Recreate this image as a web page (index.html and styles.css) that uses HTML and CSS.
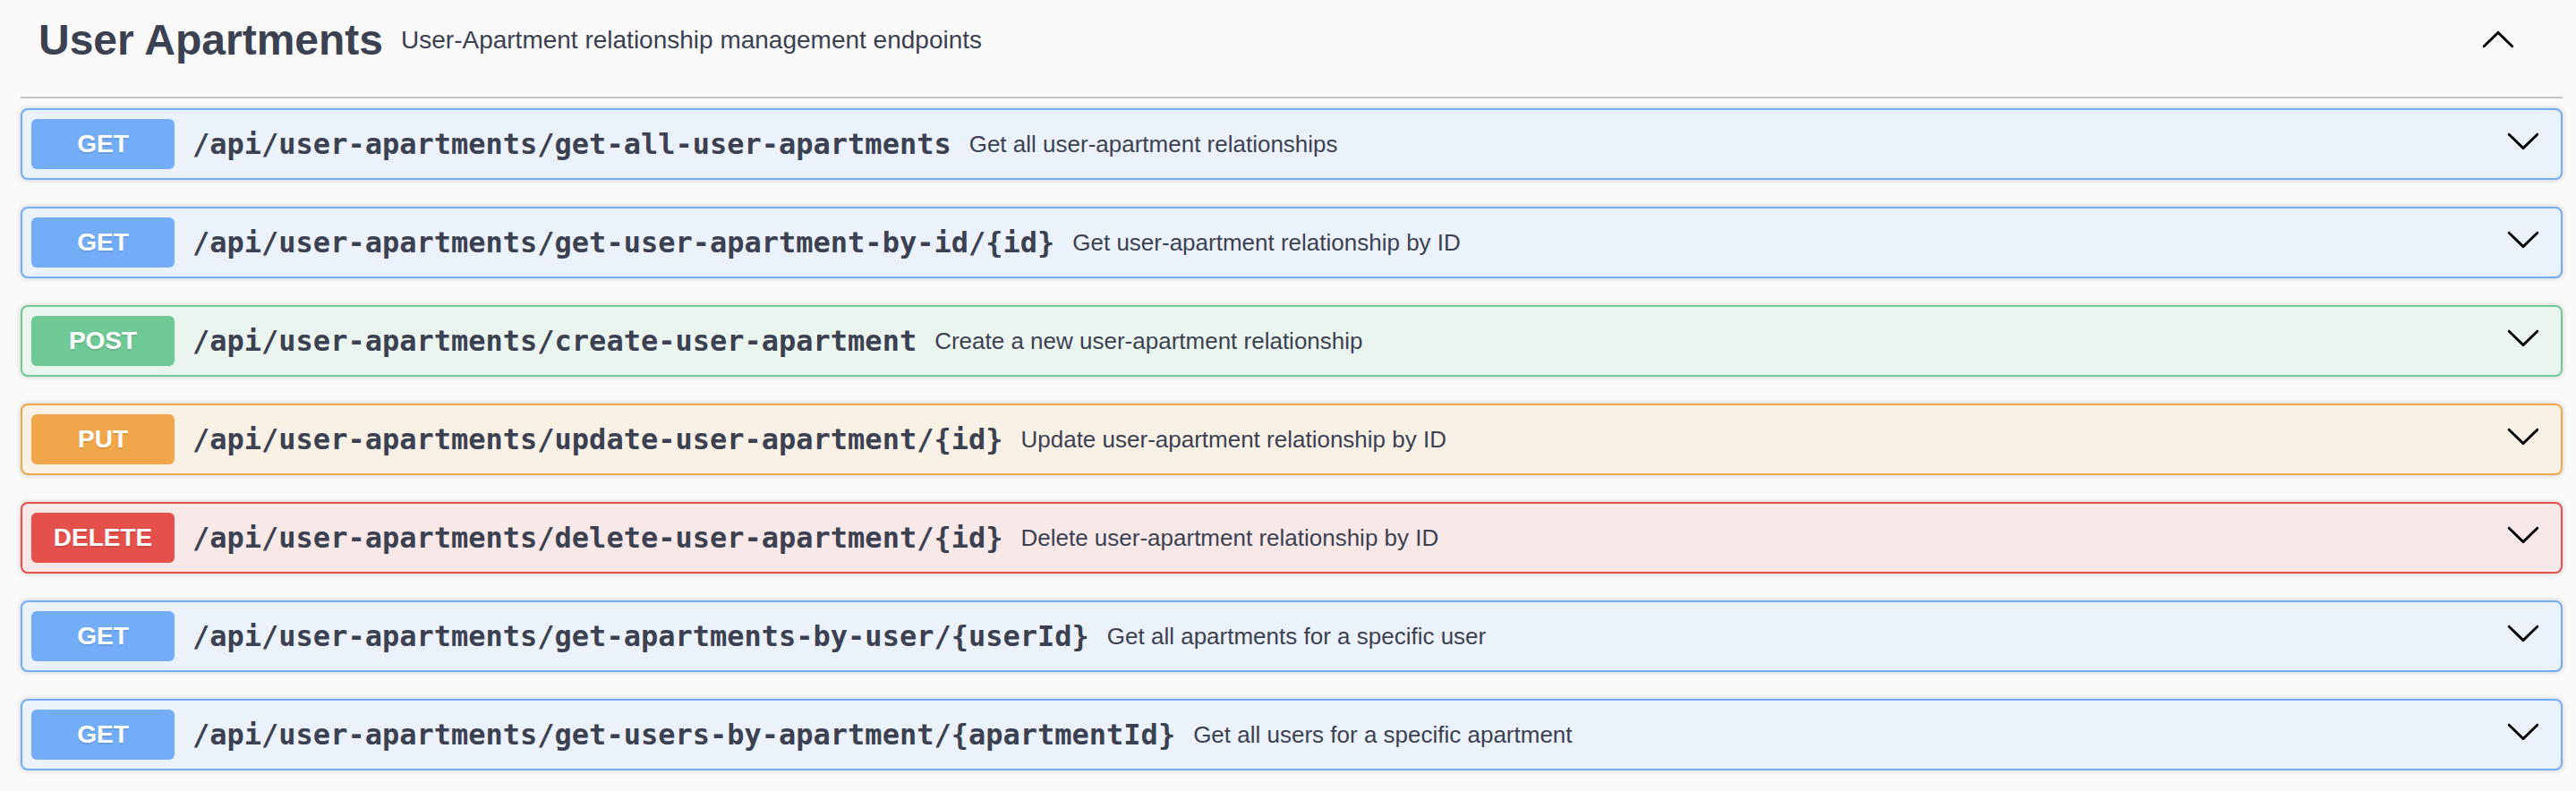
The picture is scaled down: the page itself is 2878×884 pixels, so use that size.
FILE: index.html
```html
<!DOCTYPE html>
<html lang="en">
<head>
<meta charset="utf-8">
<title>User Apartments</title>
<link rel="stylesheet" href="styles.css">
</head>
<body>
<div class="tag-section">
  <h3 class="tag">
    <span class="tag-name">User Apartments</span>
    <small class="tag-desc">User-Apartment relationship management endpoints</small>
    <button class="tag-toggle" type="button" aria-label="Collapse">
      <svg class="arrow up" viewBox="0 0 20 20" width="40" height="40"><path d="M17.418 6.109c.272-.268.709-.268.979 0s.271.701 0 .969l-7.908 7.83c-.27.268-.707.268-.979 0l-7.908-7.83c-.27-.268-.27-.701 0-.969.271-.268.709-.268.979 0L10 13.25l7.418-7.141z"/></svg>
    </button>
  </h3>

  <div class="op op-get">
    <span class="method">GET</span>
    <span class="path">/api/user-apartments/get-all-user-apartments</span>
    <span class="desc">Get all user-apartment relationships</span>
    <svg class="arrow" viewBox="0 0 20 20" width="40" height="40"><path d="M17.418 6.109c.272-.268.709-.268.979 0s.271.701 0 .969l-7.908 7.83c-.27.268-.707.268-.979 0l-7.908-7.83c-.27-.268-.27-.701 0-.969.271-.268.709-.268.979 0L10 13.25l7.418-7.141z"/></svg>
  </div>

  <div class="op op-get">
    <span class="method">GET</span>
    <span class="path">/api/user-apartments/get-user-apartment-by-id/{id}</span>
    <span class="desc">Get user-apartment relationship by ID</span>
    <svg class="arrow" viewBox="0 0 20 20" width="40" height="40"><path d="M17.418 6.109c.272-.268.709-.268.979 0s.271.701 0 .969l-7.908 7.83c-.27.268-.707.268-.979 0l-7.908-7.83c-.27-.268-.27-.701 0-.969.271-.268.709-.268.979 0L10 13.25l7.418-7.141z"/></svg>
  </div>

  <div class="op op-post">
    <span class="method">POST</span>
    <span class="path">/api/user-apartments/create-user-apartment</span>
    <span class="desc">Create a new user-apartment relationship</span>
    <svg class="arrow" viewBox="0 0 20 20" width="40" height="40"><path d="M17.418 6.109c.272-.268.709-.268.979 0s.271.701 0 .969l-7.908 7.83c-.27.268-.707.268-.979 0l-7.908-7.83c-.27-.268-.27-.701 0-.969.271-.268.709-.268.979 0L10 13.25l7.418-7.141z"/></svg>
  </div>

  <div class="op op-put">
    <span class="method">PUT</span>
    <span class="path">/api/user-apartments/update-user-apartment/{id}</span>
    <span class="desc">Update user-apartment relationship by ID</span>
    <svg class="arrow" viewBox="0 0 20 20" width="40" height="40"><path d="M17.418 6.109c.272-.268.709-.268.979 0s.271.701 0 .969l-7.908 7.83c-.27.268-.707.268-.979 0l-7.908-7.83c-.27-.268-.27-.701 0-.969.271-.268.709-.268.979 0L10 13.25l7.418-7.141z"/></svg>
  </div>

  <div class="op op-delete">
    <span class="method">DELETE</span>
    <span class="path">/api/user-apartments/delete-user-apartment/{id}</span>
    <span class="desc">Delete user-apartment relationship by ID</span>
    <svg class="arrow" viewBox="0 0 20 20" width="40" height="40"><path d="M17.418 6.109c.272-.268.709-.268.979 0s.271.701 0 .969l-7.908 7.83c-.27.268-.707.268-.979 0l-7.908-7.83c-.27-.268-.27-.701 0-.969.271-.268.709-.268.979 0L10 13.25l7.418-7.141z"/></svg>
  </div>

  <div class="op op-get">
    <span class="method">GET</span>
    <span class="path">/api/user-apartments/get-apartments-by-user/{userId}</span>
    <span class="desc">Get all apartments for a specific user</span>
    <svg class="arrow" viewBox="0 0 20 20" width="40" height="40"><path d="M17.418 6.109c.272-.268.709-.268.979 0s.271.701 0 .969l-7.908 7.83c-.27.268-.707.268-.979 0l-7.908-7.83c-.27-.268-.27-.701 0-.969.271-.268.709-.268.979 0L10 13.25l7.418-7.141z"/></svg>
  </div>

  <div class="op op-get">
    <span class="method">GET</span>
    <span class="path">/api/user-apartments/get-users-by-apartment/{apartmentId}</span>
    <span class="desc">Get all users for a specific apartment</span>
    <svg class="arrow" viewBox="0 0 20 20" width="40" height="40"><path d="M17.418 6.109c.272-.268.709-.268.979 0s.271.701 0 .969l-7.908 7.83c-.27.268-.707.268-.979 0l-7.908-7.83c-.27-.268-.27-.701 0-.969.271-.268.709-.268.979 0L10 13.25l7.418-7.141z"/></svg>
  </div>
</div>
</body>
</html>
```

FILE: styles.css
```css
html, body {
  margin: 0;
  padding: 0;
  background: #fafafa;
  color: #3b4151;
  font-family: "Liberation Sans", Arial, sans-serif;
}

.tag-section {
  padding: 0 15px 0 23px;
}

.tag {
  display: flex;
  align-items: center;
  margin: 0 0 11px;
  padding: 18px 0 36px 20px;
  border-bottom: 2px solid rgba(59, 65, 81, 0.3);
  font-weight: 400;
}

.tag-name {
  font-size: 48px;
  line-height: 54px;
  font-weight: 700;
  color: #3b4151;
}

.tag-desc {
  flex: 1;
  margin-left: 20px;
  font-size: 28px;
  line-height: 32px;
  color: #3b4151;
}

.tag-toggle {
  display: flex;
  margin: 0 52px 0 0;
  padding: 0;
  border: 0;
  background: none;
  cursor: pointer;
}

.arrow {
  display: block;
  fill: #000;
  flex: none;
}

.arrow.up {
  transform: rotate(180deg);
}

.op {
  display: flex;
  align-items: center;
  height: 80px;
  box-sizing: border-box;
  margin: 0 0 30px;
  padding: 10px;
  border: 2px solid;
  border-radius: 8px;
  box-shadow: 0 0 6px rgba(0, 0, 0, 0.19);
}

.op .arrow {
  margin: -8px 12px 0 0;
}

.method {
  flex: none;
  width: 160px;
  height: 56px;
  line-height: 56px;
  border-radius: 6px;
  text-align: center;
  font-size: 28px;
  font-weight: 700;
  color: #fff;
  text-shadow: 0 2px 0 rgba(0, 0, 0, 0.1);
}

.path {
  padding: 0 20px;
  font-family: "DejaVu Sans Mono", monospace;
  font-size: 32px;
  font-weight: 700;
  color: #3b4151;
  white-space: nowrap;
}

.desc {
  flex: 1;
  font-size: 26px;
  color: #3b4151;
}

.op-get { background: #ebf2fb; border-color: #73adf7; }
.op-get .method { background: #73adf7; }

.op-post { background: #ebf5ef; border-color: #6fc994; }
.op-post .method { background: #6fc994; }

.op-put { background: #f9f0e6; border-color: #f0a74a; }
.op-put .method { background: #f0a74a; }

.op-delete { background: #f9e8e8; border-color: #e5504a; }
.op-delete .method { background: #e5504a; }
```
